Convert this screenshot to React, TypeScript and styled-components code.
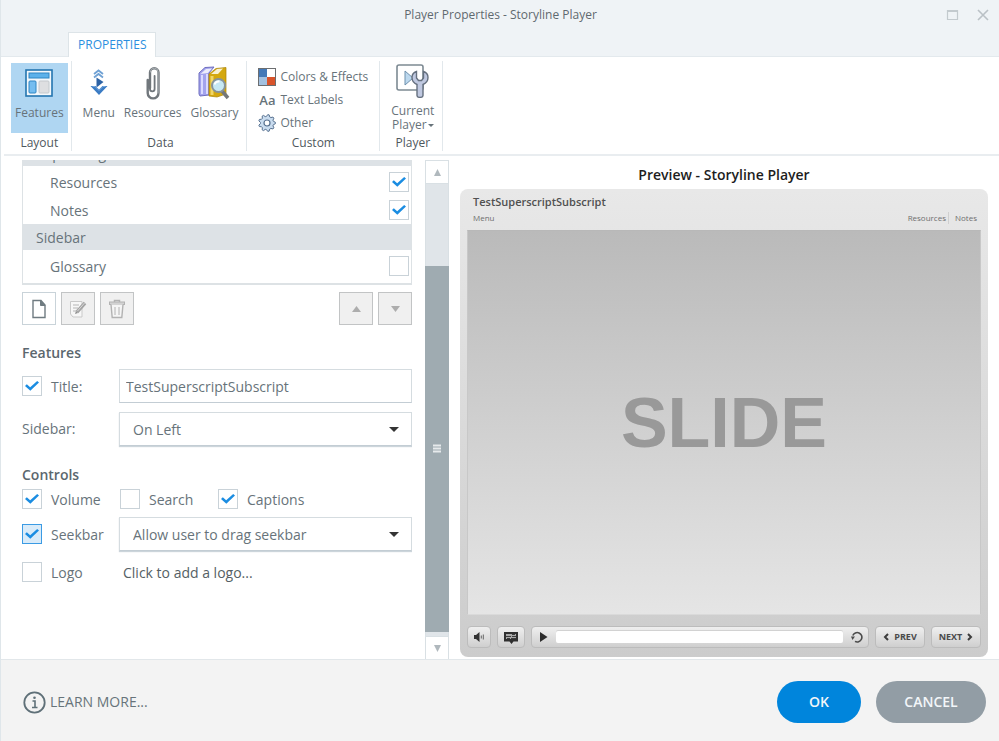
import React from "react";
import styled, { createGlobalStyle, css } from "styled-components";

const GlobalStyle = createGlobalStyle`
  *, *::before, *::after { box-sizing: border-box; }
  body { margin: 0; background: #ffffff; font-family: "Open Sans", "Noto Sans", sans-serif; font-size: 14px; line-height: 20px; color: #67737a; }
  button, input, select { font: inherit; color: inherit; margin: 0; }
  button { padding: 0; border: 0; background: none; cursor: pointer; }
  svg { display: block; flex: none; }
`;

const Dialog = styled.div`
  display: flex;
  flex-direction: column;
  min-height: 100vh;
  border-left: 1px solid #dfe6ea;
`;

/* Title bar */
const Header = styled.header`
  display: flex;
  flex-direction: column;
  justify-content: space-between;
  height: 57px;
  padding-left: 3px;
  background: #eff3f6;
  border-bottom: 1px solid #e3e9ed;
`;
const TitleBar = styled.div`
  display: grid;
  grid-template-columns: 1fr auto 1fr;
  align-items: center;
  height: 30px;
  padding-right: 2px;
`;
const Title = styled.h1`
  grid-column: 2;
  margin: 0;
  font-size: 12px;
  font-weight: 400;
  line-height: 16px;
  color: #5f696f;
`;
const WindowButtons = styled.div`
  display: flex;
  justify-content: flex-end;
  gap: 18px;
  padding-right: 8px;
`;
const Tab = styled.button`
  align-self: flex-start;
  height: 25px;
  margin: 0 0 -1px 64px;
  padding: 0 9px;
  border: 1px solid #dde4e8;
  border-bottom: 0;
  background: #ffffff;
  color: #2b8fe0;
  font-size: 12px;
  line-height: 16px;
`;

/* Ribbon */
const Ribbon = styled.nav`
  display: flex;
  height: 99px;
  margin-left: 3px;
  padding: 4px 0 3px;
  border-bottom: 2px solid #e9edf0;
`;
const Group = styled.section<{ $pad: string }>`
  display: flex;
  flex-direction: column;
  justify-content: space-between;
  padding: ${(p) => p.$pad};
  border-right: 1px solid #e2e8ec;
`;
const GroupItems = styled.div<{ $gap?: number; $column?: boolean }>`
  display: flex;
  flex-direction: ${(p) => (p.$column ? "column" : "row")};
  align-items: flex-start;
  gap: ${(p) => p.$gap ?? 0}px;
`;
const GroupLabel = styled.h2`
  margin: 0;
  font-size: 12px;
  font-weight: 400;
  line-height: 16px;
  text-align: center;
  color: #4f585d;
`;
const RibbonButton = styled.button<{ $active?: boolean }>`
  display: flex;
  flex-direction: column;
  align-items: center;
  gap: 6px;
  min-height: 70px;
  padding: 3px ${(p) => (p.$active ? 4 : 0)}px 0;
  background: ${(p) => (p.$active ? "#afd6f2" : "transparent")};
  font-size: 12px;
  line-height: 14px;
`;
const SplitLabel = styled.span`
  display: flex;
  flex-direction: column;
  align-items: center;
`;
const ArrowLine = styled.span`
  display: flex;
  align-items: center;
  gap: 1px;
`;
const SmallButton = styled.button`
  display: flex;
  align-items: center;
  gap: 4px;
  height: 23px;
  font-size: 12px;
  line-height: 16px;
`;
const AaGlyph = styled.span`
  width: 18px;
  font-size: 13px;
  font-weight: 600;
`;

/* Body */
const Body = styled.main`
  display: flex;
  flex: 1;
  padding: 4px 11px 0 21px;
`;
const Settings = styled.form`
  flex: 0 1 390px;
  min-width: 320px;
  overflow: hidden;
`;
const List = styled.div`
  margin-top: -20px;
  padding-bottom: 3px;
  border: 1px solid #dde2e5;
  border-width: 0 1px 2px;
`;
const ListHeading = styled.div`
  height: 26px;
  padding-left: 13px;
  background: #dde2e6;
  line-height: 28px;
`;
const ListGroup = styled.div`
  padding-top: 2px;
`;
const ListRow = styled.label`
  display: flex;
  align-items: center;
  justify-content: space-between;
  height: 28px;
  padding: 0 2px 0 27px;
`;
const LabelText = styled.span`
  padding-top: 2px;
`;
const Check = styled.input.attrs({ type: "checkbox" })<{ $hot?: boolean }>`
  appearance: none;
  display: grid;
  flex: none;
  width: 20px;
  height: 20px;
  border: 1px solid ${(p) => (p.$hot ? "#3b9be4" : "#c9d2d8")};
  background: ${(p) => (p.$hot ? "#d9ebf9" : "#ffffff")};
  place-items: center;
  &:checked::before {
    content: "";
    width: 14px;
    height: 11px;
    background: #1b8de2;
    clip-path: polygon(0 50%, 13% 35%, 37% 62%, 87% 4%, 100% 18%, 38% 94%);
  }
`;
const Toolbar = styled.div`
  display: flex;
  gap: 5px;
  margin-top: 7px;
`;
const ToolButton = styled.button<{ $enabled?: boolean; $push?: boolean }>`
  display: grid;
  place-items: center;
  width: 34px;
  height: 33px;
  margin-left: ${(p) => (p.$push ? "auto" : "0")};
  border: 1px solid ${(p) => (p.$enabled ? "#c9d3d9" : "#c2c4c5")};
  background: ${(p) => (p.$enabled ? "#ffffff" : "#f0f0f0")};
`;
const SectionTitle = styled.h2<{ $top: number; $bottom: number }>`
  margin: ${(p) => p.$top}px 0 ${(p) => p.$bottom}px;
  font-size: 14px;
  font-weight: 600;
  line-height: 20px;
  color: #5b676e;
`;
const Field = styled.div<{ $bottom: number }>`
  display: grid;
  grid-template-columns: 97px 1fr;
  align-items: center;
  margin-bottom: ${(p) => p.$bottom}px;
`;
const CheckLabel = styled.label`
  display: flex;
  align-items: center;
  gap: 9px;
`;
const Checks = styled.div`
  display: grid;
  grid-template-columns: 98px 98px 1fr;
  margin-bottom: 7px;
`;
const boxed = css`
  width: 100%;
  height: 34px;
  border: 1px solid #d5dce0;
  border-bottom-color: #c3cdd4;
  border-radius: 0;
  background: #ffffff;
`;
const TextBox = styled.input`
  ${boxed}
  padding: 0 6px;
`;
const SelectWrap = styled.div`
  position: relative;
  svg { position: absolute; right: 13px; top: 15px; pointer-events: none; }
`;
const Select = styled.select`
  ${boxed}
  display: block;
  appearance: none;
  padding: 1px 13px 0;
  box-shadow: 0 1px 1px #ccd5db;
`;
const LogoButton = styled.button`
  justify-self: start;
  padding: 3px 0 0 4px;
  color: #555f65;
`;

const ScrollBar = styled.div`
  display: flex;
  flex-direction: column;
  flex: none;
  width: 24px;
  margin-left: 13px;
  border: 1px solid #d9e0e4;
  border-bottom: 0;
  background: #e0e5e9;
`;
const ScrollButton = styled.button`
  display: grid;
  place-items: center;
  height: 23px;
  background: #ffffff;
  border: 0 solid #d9e0e4;
  &:first-child { border-bottom-width: 1px; }
  &:last-child { border-top-width: 1px; }
`;
const ScrollTrack = styled.div`
  display: flex;
  flex-direction: column;
  flex: 1;
  padding: 82px 0 4px;
`;
const ScrollThumb = styled.div`
  display: grid;
  flex: 1;
  place-items: center;
  margin: 0 -1px;
  background: #9fabb1;
`;

/* Preview */
const Preview = styled.section`
  display: flex;
  flex: 1;
  flex-direction: column;
  min-width: 0;
  margin-left: 11px;
`;
const PreviewTitle = styled.h2`
  margin: 0;
  padding-top: 5px;
  height: 29px;
  font-size: 14px;
  font-weight: 600;
  line-height: 20px;
  text-align: center;
  color: #1d1d1d;
`;
const Player = styled.div`
  display: flex;
  flex: 1;
  flex-direction: column;
  margin-bottom: 2px;
  padding: 5px 7px 9px;
  border-radius: 8px;
  background: linear-gradient(#e8e8e8, #e4e4e4 15%, #cccccc);
`;
const PlayerTitle = styled.div`
  padding-left: 6px;
  font-size: 11px;
  font-weight: 600;
  line-height: 16px;
  color: #505050;
`;
const PlayerMenu = styled.div`
  display: flex;
  align-items: center;
  height: 16px;
  margin-bottom: 4px;
  padding: 0 4px 0 6px;
  font-size: 8px;
  line-height: 12px;
  color: #6f6f6f;
`;
const MenuLink = styled.button<{ $push?: boolean; $divided?: boolean }>`
  margin-left: ${(p) => (p.$push ? "auto" : "0")};
  ${(p) => p.$divided && css`
    margin-left: 2px;
    padding-left: 6px;
    border-left: 1px solid #cfcfcf;
  `}
`;
const Slide = styled.div`
  display: grid;
  flex: 1;
  place-items: center;
  border: 1px solid #c4c4c4;
  border-color: #b8b8b8 #c8c8c8 #dadada;
  background: linear-gradient(#bababa, #e5e5e5);
  color: #999999;
  font-family: "Liberation Sans", Arial, sans-serif;
  font-size: 70px;
  font-weight: 700;
  line-height: 80px;
`;
const PlayerBar = styled.div`
  display: flex;
  gap: 6px;
  margin-top: 11px;
`;
const raised = css`
  display: flex;
  align-items: center;
  justify-content: center;
  height: 22px;
  border: 1px solid #bcbcbc;
  border-radius: 4px;
  background: linear-gradient(#efefef, #cfcfcf);
`;
const PlayerButton = styled.button<{ $width: number }>`
  ${raised}
  width: ${(p) => p.$width}px;
  gap: 5px;
  font-size: 9px;
  font-weight: 700;
  line-height: 12px;
  color: #4a4a4a;
`;
const Seek = styled.div`
  ${raised}
  flex: 1;
  gap: 8px;
  padding: 0 5px 0 7px;
`;
const SeekBar = styled.div`
  flex: 1;
  height: 12px;
  border-radius: 2px;
  background: #ffffff;
  box-shadow: 0 -1px 0 #d2d2d2;
`;

/* Footer */
const Footer = styled.footer`
  display: flex;
  align-items: center;
  gap: 15px;
  height: 82px;
  padding: 3px 13px 0 22px;
  border-top: 1px solid #e2e7ea;
  background: #f3f3f3;
`;
const LearnMore = styled.a`
  display: flex;
  align-items: center;
  gap: 4px;
  margin-right: auto;
  color: #67737a;
  text-decoration: none;
`;
const Pill = styled.button<{ $primary?: boolean }>`
  min-width: ${(p) => (p.$primary ? 84 : 110)}px;
  height: 42px;
  padding: 0 26px;
  border-radius: 21px;
  background: ${(p) => (p.$primary ? "#0085dc" : "#929da5")};
  color: #f2f6f9;
  font-weight: 600;
`;

const Triangle = ({ up, color, w = 10, h = 6 }: { up?: boolean; color: string; w?: number; h?: number }) => (
  <svg width={w} height={h} viewBox="0 0 10 6" preserveAspectRatio="none" aria-hidden="true">
    <path d={up ? "M0 6 5 0l5 6z" : "M0 0h10L5 6z"} fill={color} />
  </svg>
);

const FeaturesIcon = () => (
  <svg width="28" height="34" viewBox="0 0 28 34" aria-hidden="true">
    <rect x="1" y="4" width="26" height="26" fill="#f4f8fb" stroke="#2475b0" strokeWidth="1.6" />
    <rect x="4" y="7" width="20" height="5" fill="#5cb1ea" stroke="#2f86c4" />
    <rect x="4" y="15" width="7" height="12" rx="1" fill="#74bdf0" stroke="#2f86c4" />
    <rect x="14" y="15" width="10" height="12" rx="1" fill="#dedfe1" stroke="#c3c8cc" />
  </svg>
);
const MenuIcon = () => (
  <svg width="20" height="34" viewBox="0 0 20 34" aria-hidden="true" fill="none">
    <path d="M5 8 9.500 4.500 14 8M5 11.500 9.500 8l4.500 3.500" stroke="#6fa1d4" strokeWidth="1.800" />
    <path d="M7.500 11.500 14.500 16l-7 5.500z" fill="#2d63a5" />
    <path d="M1.500 20h5l3.500 3.500 3.500-3.500h5L10 29z" fill="#3b7cc4" />
    <path d="M3.500 20.500h2.500l4 4 4-4h2.500" stroke="#78aae0" strokeWidth="1" />
  </svg>
);
const ClipIcon = () => (
  <svg width="16" height="34" viewBox="0 0 16 34" aria-hidden="true" fill="none" strokeLinecap="round">
    <path d="M5 22V6.500a4 4 0 0 1 8.500 0V27a5.300 5.300 0 0 1-10.800 0V14" stroke="#71777c" strokeWidth="2.400" />
    <path d="M5 14v9a2.300 2.300 0 0 0 4.600 0V10" stroke="#71777c" strokeWidth="1.800" />
    <path d="M5.500 6a3.700 3.700 0 0 1 7.600 0v21" stroke="#b9bfc3" strokeWidth=".8" />
  </svg>
);
const GlossaryIcon = () => (
  <svg width="32" height="34" viewBox="0 0 32 34" aria-hidden="true">
    <path d="M1 7 7 1.500 16 1 11 7v22l-9 1-1-2z" fill="#a3a3ee" stroke="#6e6ebf" />
    <path d="M2.500 8 8 3l6-.5L10 7z" fill="#ececfb" />
    <path d="M4 9v19M9 8v20" stroke="#dadaff" strokeWidth="2" />
    <path d="M11 8 18 2.500l10-1V28l-9 3-8-1z" fill="#d4a80f" stroke="#a98307" strokeWidth=".7" />
    <path d="m13 8 6-5 6-.5L20 8z" fill="#f7f0d2" />
    <path d="M14 10v19" stroke="#f1d668" strokeWidth="3" />
    <path d="m24 25 6 7" stroke="#74777a" strokeWidth="3.500" />
    <circle cx="20.500" cy="19.500" r="6.500" fill="#c6e8f4" stroke="#87939b" strokeWidth="2" />
    <path d="M16.500 18.500a4.500 4.500 0 0 1 5-3" stroke="#fff" strokeWidth="2" fill="none" />
  </svg>
);
const ColorsIcon = () => (
  <svg width="18" height="18" viewBox="0 0 18 18" aria-hidden="true">
    <rect width="18" height="18" fill="#6c6e70" />
    <path d="M1 1h8v8H1z" fill="#4479b7" />
    <path d="M9 1h8v8H9z" fill="#fff" />
    <path d="M1 9h8v8H1z" fill="#a3c1e0" />
    <path d="M9 9h8v8H9z" fill="#d9542b" />
  </svg>
);

const TEETH = 9;
const gearPath = Array.from({ length: TEETH * 4 }, (_, i) => {
  const angle = ((i - 0.5) * Math.PI) / (TEETH * 2);
  const radius = i % 4 < 2 ? 8.4 : 6.6;
  return `${i ? "L" : "M"}${(9 + radius * Math.cos(angle)).toFixed(2)} ${(9 + radius * Math.sin(angle)).toFixed(2)}`;
}).join("") + "z";

const GearIcon = () => (
  <svg width="18" height="18" viewBox="0 0 18 18" aria-hidden="true">
    <path d={gearPath} fill="#c9dcef" stroke="#56708f" strokeLinejoin="round" />
    <circle cx="9" cy="9" r="3" fill="#fff" stroke="#56708f" strokeWidth="1.200" />
  </svg>
);
const PlayerIcon = () => (
  <svg width="34" height="34" viewBox="0 0 34 34" aria-hidden="true">
    <rect x="1" y="1" width="26" height="25" rx="2" fill="#fff" stroke="#7d8a93" strokeWidth="1.600" />
    <path d="M9 7v14l8-7z" fill="#bcd8ee" stroke="#6f91ad" />
    <path d="M20.500 7.500c-3 1-4.500 3.500-4.500 6 0 3.300 2 5.700 5 7V31.500c0 2.500 6 2.500 6 0V20.500c3-1.300 5-3.700 5-7 0-2.500-1.500-5-4.500-6V14l-2 2.500h-3l-2-2.500z" fill="#bfc8e0" stroke="#65707f" strokeWidth="1.400" />
  </svg>
);
const PageIcon = () => (
  <svg width="16" height="20" viewBox="0 0 16 20" aria-hidden="true">
    <path d="M2 1.500h8L14 6v12.500H2z" fill="#fff" stroke="#6f7b81" strokeWidth="1.400" />
    <path d="M9.500 1.500V6.500H14z" fill="#6f7b81" stroke="#6f7b81" />
  </svg>
);
const EditIcon = () => (
  <svg width="18" height="20" viewBox="0 0 18 20" aria-hidden="true" fill="none">
    <path d="M1.500 2.500H13v15.500H4l-2.500-3z" fill="#f7f7f7" stroke="#c9c9c9" />
    <path d="M4 6h6M4 9h5M4 12h3" stroke="#b5b5b5" />
    <path d="m8 13 8-9" stroke="#a4a4a4" strokeWidth="3.400" />
    <path d="m8.500 12 7-8" stroke="#d8d8d8" />
    <path d="m6 15 1-3 2 2z" fill="#8e8e8e" />
  </svg>
);
const TrashIcon = () => (
  <svg width="18" height="20" viewBox="0 0 18 20" aria-hidden="true" fill="none" stroke="#b2b2b2">
    <path d="M6.500 3V1.500h5V3" strokeWidth="1.500" />
    <rect x="1.500" y="3" width="15" height="2.500" fill="#d2d2d2" />
    <path d="m3 5.500 1.200 13h9.600L15 5.500" fill="#f5f5f5" strokeWidth="1.400" />
    <path d="M7 8v8M11 8v8" />
  </svg>
);
const GripIcon = () => (
  <svg width="8" height="10" viewBox="0 0 8 10" aria-hidden="true">
    <path d="M0 1.500h8M0 4.500h8M0 7.500h8" stroke="#e6eaec" strokeWidth="2" />
  </svg>
);
const InfoIcon = () => (
  <svg width="23" height="23" viewBox="0 0 23 23" aria-hidden="true" fill="none" stroke="#5f7078">
    <circle cx="11.500" cy="11.500" r="10.200" strokeWidth="1.800" />
    <path d="M9.500 10h2.500v6.500M9 16.500h5.500" strokeWidth="1.600" />
    <circle cx="11.500" cy="6.800" r="1.300" fill="#5f7078" stroke="none" />
  </svg>
);
const SoundIcon = () => (
  <svg width="12" height="12" viewBox="0 0 12 12" aria-hidden="true">
    <path d="M1 4h2l3.500-3v10L3 8H1z" fill="#333" />
    <path d="M8.300 4.500v3M10.300 3.500v5" stroke="#666" />
  </svg>
);
const CaptionIcon = () => (
  <svg width="16" height="13" viewBox="0 0 16 13" aria-hidden="true">
    <path d="M1 1h14v9.500H10.500L8.500 13l-2-2.500H1z" fill="#303030" />
    <path d="M3 3h10v5H3z" fill="#a9a9a9" />
    <path d="M3 5.500h5M9 5.500h4M4 7.500h3M8 7.500h5M9 3.500h3" stroke="#3c3c3c" />
  </svg>
);
const PlayIcon = () => (
  <svg width="9" height="10" viewBox="0 0 9 10" aria-hidden="true">
    <path d="M1 0v10l7.500-5z" fill="#2b2b2b" />
  </svg>
);
const ReplayIcon = () => (
  <svg width="12" height="12" viewBox="0 0 12 12" aria-hidden="true">
    <path d="M4 10.400A4.700 4.700 0 1 0 1.800 4.500" fill="none" stroke="#4b4b4b" strokeWidth="1.600" />
    <path d="M0 5.500h4L1.500 9z" fill="#4b4b4b" />
  </svg>
);
const Chevron = ({ right }: { right?: boolean }) => (
  <svg width="6" height="8" viewBox="0 0 6 8" aria-hidden="true">
    <path d={right ? "m1 1 3 3-3 3" : "M5 1 2 4l3 3"} fill="none" stroke="#3d3d3d" strokeWidth="2" />
  </svg>
);

const CheckField = ({ label, on, hot }: { label: string; on?: boolean; hot?: boolean }) => (
  <CheckLabel>
    <Check defaultChecked={on} $hot={hot} />
    <LabelText>{label}</LabelText>
  </CheckLabel>
);
const ListOption = ({ label, on }: { label: string; on?: boolean }) => (
  <ListRow>
    <LabelText>{label}</LabelText>
    <Check defaultChecked={on} />
  </ListRow>
);
const DropDown = ({ id, label, value }: { id: string; label: string; value: string }) => (
  <SelectWrap>
    <Select id={id} aria-label={label} defaultValue={value}>
      <option>{value}</option>
    </Select>
    <Triangle color="#343434" w={10} h={5} />
  </SelectWrap>
);

export default function App() {
  return (
    <Dialog>
      <GlobalStyle />
      <Header>
        <TitleBar>
          <Title>Player Properties - Storyline Player</Title>
          <WindowButtons>
            <button type="button" aria-label="Maximize">
              <svg width="13" height="12" viewBox="0 0 13 12" aria-hidden="true">
                <path d="M1.500 1.500h10v9h-10zM1 2.500h11" fill="none" stroke="#c3cace" strokeWidth="1.200" />
              </svg>
            </button>
            <button type="button" aria-label="Close">
              <svg width="12" height="12" viewBox="0 0 12 12" aria-hidden="true">
                <path d="m1 1 10 10M11 1 1 11" stroke="#bac1c6" strokeWidth="1.600" />
              </svg>
            </button>
          </WindowButtons>
        </TitleBar>
        <Tab type="button">PROPERTIES</Tab>
      </Header>

      <Ribbon aria-label="Player properties">
        <Group $pad="2px 3px 0 7px">
          <RibbonButton type="button" $active><FeaturesIcon />Features</RibbonButton>
          <GroupLabel>Layout</GroupLabel>
        </Group>
        <Group $pad="2px 8px 0 11px">
          <GroupItems $gap={9}>
            <RibbonButton type="button"><MenuIcon />Menu</RibbonButton>
            <RibbonButton type="button"><ClipIcon />Resources</RibbonButton>
            <RibbonButton type="button"><GlossaryIcon />Glossary</RibbonButton>
          </GroupItems>
          <GroupLabel>Data</GroupLabel>
        </Group>
        <Group $pad="4px 11px 0 11px">
          <GroupItems $column>
            <SmallButton type="button"><ColorsIcon />Colors &amp; Effects</SmallButton>
            <SmallButton type="button"><AaGlyph>Aa</AaGlyph>Text Labels</SmallButton>
            <SmallButton type="button"><GearIcon />Other</SmallButton>
          </GroupItems>
          <GroupLabel>Custom</GroupLabel>
        </Group>
        <Group $pad="0 8px 0 11px">
          <RibbonButton type="button">
            <PlayerIcon />
            <SplitLabel>
              <span>Current</span>
              <ArrowLine>Player<Triangle color="#67737a" w={6} h={3} /></ArrowLine>
            </SplitLabel>
          </RibbonButton>
          <GroupLabel>Player</GroupLabel>
        </Group>
      </Ribbon>

      <Body>
        <Settings>
          <List>
            <ListHeading>Topbar Right</ListHeading>
            <ListGroup>
              <ListOption label="Resources" on />
              <ListOption label="Notes" on />
            </ListGroup>
            <ListHeading>Sidebar</ListHeading>
            <ListGroup>
              <ListOption label="Glossary" />
            </ListGroup>
          </List>
          <Toolbar>
            <ToolButton type="button" aria-label="New" $enabled><PageIcon /></ToolButton>
            <ToolButton type="button" aria-label="Edit"><EditIcon /></ToolButton>
            <ToolButton type="button" aria-label="Delete"><TrashIcon /></ToolButton>
            <ToolButton type="button" aria-label="Move up" $push><Triangle up color="#adadad" w={9} /></ToolButton>
            <ToolButton type="button" aria-label="Move down"><Triangle color="#adadad" w={9} /></ToolButton>
          </Toolbar>

          <SectionTitle $top={18} $bottom={6}>Features</SectionTitle>
          <Field $bottom={9}>
            <CheckField label="Title:" on />
            <TextBox aria-label="Title" defaultValue="TestSuperscriptSubscript" />
          </Field>
          <Field $bottom={19}>
            <label htmlFor="sidebar">Sidebar:</label>
            <DropDown id="sidebar" label="Sidebar" value="On Left" />
          </Field>

          <SectionTitle $top={0} $bottom={3}>Controls</SectionTitle>
          <Checks>
            <CheckField label="Volume" on />
            <CheckField label="Search" />
            <CheckField label="Captions" on />
          </Checks>
          <Field $bottom={9}>
            <CheckField label="Seekbar" on hot />
            <DropDown id="seekbar" label="Seekbar mode" value="Allow user to drag seekbar" />
          </Field>
          <Field $bottom={0}>
            <CheckField label="Logo" />
            <LogoButton type="button">Click to add a logo...</LogoButton>
          </Field>
        </Settings>

        <ScrollBar>
          <ScrollButton type="button" aria-label="Scroll up"><Triangle up color="#b0b8bd" w={7} h={7} /></ScrollButton>
          <ScrollTrack><ScrollThumb><GripIcon /></ScrollThumb></ScrollTrack>
          <ScrollButton type="button" aria-label="Scroll down"><Triangle color="#b0b8bd" w={7} h={7} /></ScrollButton>
        </ScrollBar>

        <Preview>
          <PreviewTitle>Preview - Storyline Player</PreviewTitle>
          <Player>
            <PlayerTitle>TestSuperscriptSubscript</PlayerTitle>
            <PlayerMenu>
              <MenuLink type="button">Menu</MenuLink>
              <MenuLink type="button" $push>Resources</MenuLink>
              <MenuLink type="button" $divided>Notes</MenuLink>
            </PlayerMenu>
            <Slide>SLIDE</Slide>
            <PlayerBar>
              <PlayerButton type="button" $width={24} aria-label="Volume"><SoundIcon /></PlayerButton>
              <PlayerButton type="button" $width={28} aria-label="Captions"><CaptionIcon /></PlayerButton>
              <Seek>
                <button type="button" aria-label="Play"><PlayIcon /></button>
                <SeekBar />
                <button type="button" aria-label="Replay"><ReplayIcon /></button>
              </Seek>
              <PlayerButton type="button" $width={50}><Chevron />PREV</PlayerButton>
              <PlayerButton type="button" $width={50}>NEXT<Chevron right /></PlayerButton>
            </PlayerBar>
          </Player>
        </Preview>
      </Body>

      <Footer>
        <LearnMore href="#learn-more"><InfoIcon />LEARN MORE...</LearnMore>
        <Pill type="button" $primary>OK</Pill>
        <Pill type="button">CANCEL</Pill>
      </Footer>
    </Dialog>
  );
}
